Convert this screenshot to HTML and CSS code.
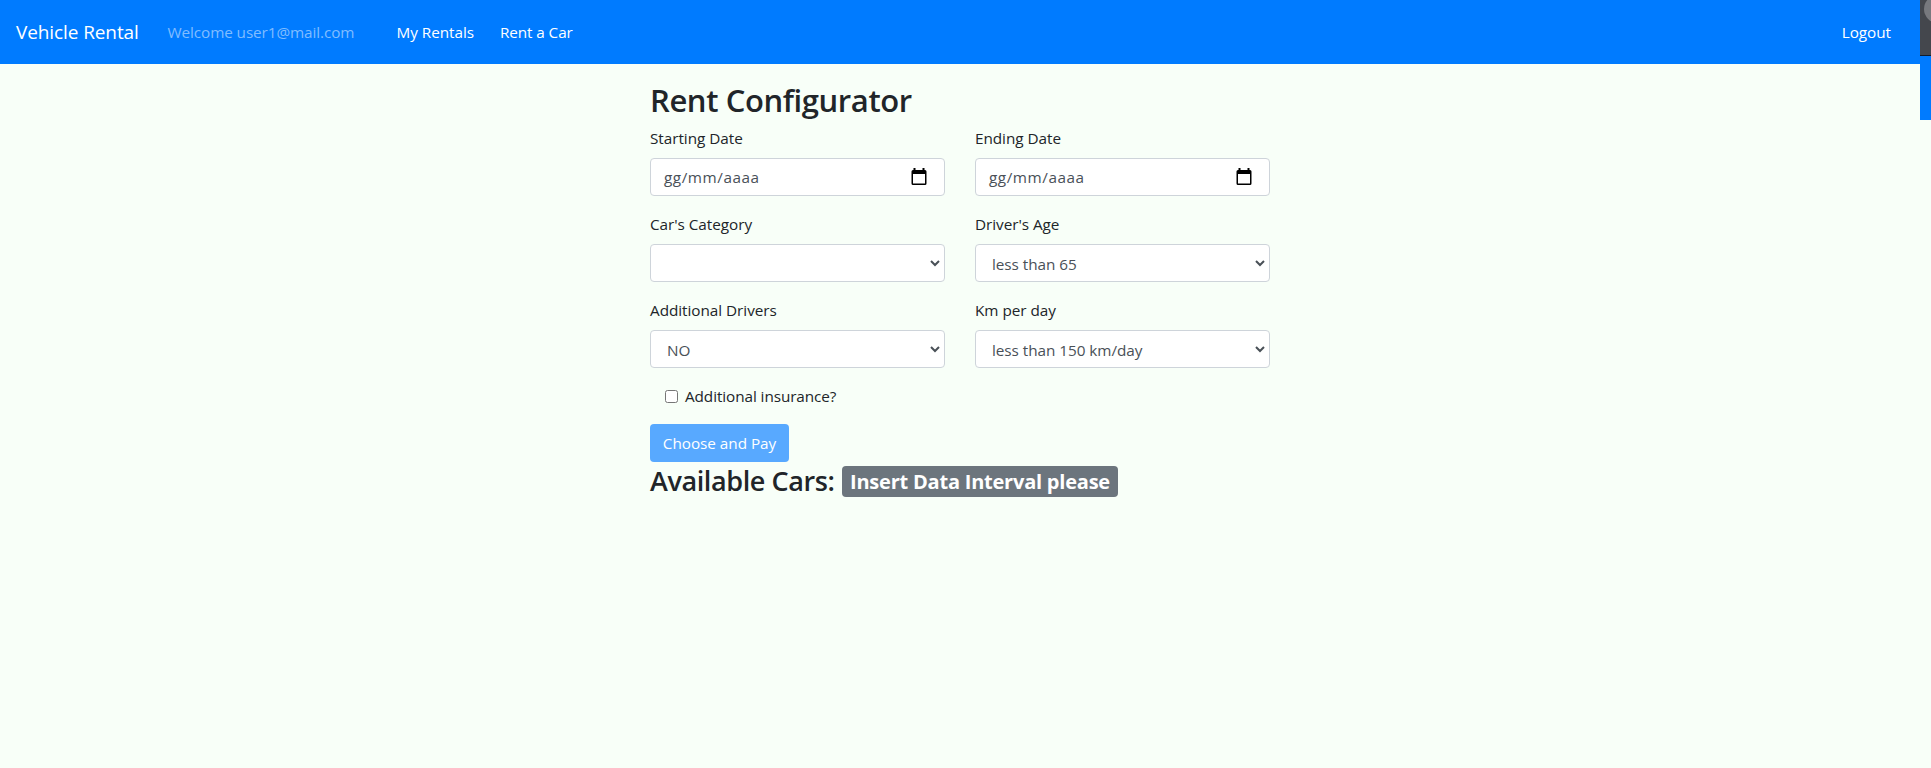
FILE: index.html
```html
<!DOCTYPE html>
<html lang="en">
<head>
<meta charset="utf-8">
<title>Vehicle Rental</title>
<link rel="stylesheet" href="styles.css">
</head>
<body>
<nav class="navbar">
  <a class="brand">Vehicle Rental</a>
  <span class="welcome">Welcome user1@mail.com</span>
  <a class="nav-link rentals">My Rentals</a>
  <a class="nav-link rent">Rent a Car</a>
  <a class="nav-link logout">Logout</a>
</nav>
<div class="edge"><svg class="edge-top" width="11" height="56" viewBox="0 0 11 56"><rect width="11" height="56" fill="#44474d"/><circle cx="18" cy="9" r="14" fill="#77797e"/><rect y="55" width="11" height="1" fill="#111c2c"/></svg></div>
<main class="page">
  <h2 class="title">Rent Configurator</h2>
  <form class="form">
    <div class="group"><label>Starting Date</label>
      <div class="control date"><span>gg/mm/aaaa</span><svg class="calendar" width="16" height="18" viewBox="0 0 16 18"><path fill-rule="evenodd" d="M2.5 0h2v2h7V0h2v2H14q1.500 0 1.500 1.500v12Q15.500 17 14 17H2Q.5 17 .5 15.500v-12Q.5 2 2 2h.5zM2 6v9.500h12V6z"/></svg></div></div>
    <div class="group"><label>Ending Date</label>
      <div class="control date"><span>gg/mm/aaaa</span><svg class="calendar" width="16" height="18" viewBox="0 0 16 18"><path fill-rule="evenodd" d="M2.5 0h2v2h7V0h2v2H14q1.500 0 1.500 1.500v12Q15.500 17 14 17H2Q.5 17 .5 15.500v-12Q.5 2 2 2h.5zM2 6v9.500h12V6z"/></svg></div></div>
    <div class="group"><label>Car's Category</label>
      <div class="control select"><span></span><svg class="chevron" width="10" height="7" viewBox="0 0 10 7"><path d="M1 1l4 4 4-4"/></svg></div></div>
    <div class="group"><label>Driver's Age</label>
      <div class="control select"><span>less than 65</span><svg class="chevron" width="10" height="7" viewBox="0 0 10 7"><path d="M1 1l4 4 4-4"/></svg></div></div>
    <div class="group"><label>Additional Drivers</label>
      <div class="control select"><span>NO</span><svg class="chevron" width="10" height="7" viewBox="0 0 10 7"><path d="M1 1l4 4 4-4"/></svg></div></div>
    <div class="group"><label>Km per day</label>
      <div class="control select"><span>less than 150 km/day</span><svg class="chevron" width="10" height="7" viewBox="0 0 10 7"><path d="M1 1l4 4 4-4"/></svg></div></div>
  </form>
  <div class="check"><input type="checkbox"><span>Additional insurance?</span></div>
  <button class="pay">Choose and Pay</button>
  <h3 class="available"><span class="caption">Available Cars:</span><span class="badge">Insert Data Interval please</span></h3>
</main>
</body>
</html>
```
FILE: styles.css
```css
*{box-sizing:border-box}
body{margin:0;height:768px;overflow:hidden;background:#f8fff8;color:#212529;font:15.3px/24px "Open Sans","Noto Sans",sans-serif;letter-spacing:-.04px}
.navbar{display:flex;align-items:center;height:64px;width:1920px;padding:0 29px 0 16px;background:#007bff;color:#fff}
.brand{width:151.500px;font-size:19px;letter-spacing:-.1px}
.welcome{width:229px;color:#80bdff;letter-spacing:-.09px}
.rentals{width:103.500px}
.rent{letter-spacing:-.1px}
.logout{margin-left:auto}
.edge{position:absolute;right:0;top:0;width:11px;height:120px;background:#007bff}
.edge-top{display:block}
.page{width:620px;margin:16px 0 0 650px}
.title{font-size:31px;line-height:38.4px;font-weight:600;letter-spacing:-.4px;margin:0 0 8px;padding-top:1px;height:38.4px}
.form{display:grid;grid-template-columns:295px 295px;column-gap:30px;row-gap:16px}
.group label{display:block;height:24px;margin-bottom:8px}
.control{display:flex;align-items:center;justify-content:space-between;height:38px;border:1px solid #ced4da;border-radius:4px;background:#fff;color:#495057;padding:0 17px 0 13px}
.date{letter-spacing:.55px}
.select{padding:0 4px 0 16px}
.select span{padding-top:2px}
.chevron path{fill:none;stroke:#495057;stroke-width:2}
.check{display:flex;align-items:center;height:24px;margin:16px 0;padding-left:15px;letter-spacing:-.08px}
.check input{margin:0 7px 0 0;width:13px;height:13px}
.pay{display:block;width:139px;height:38px;border:0;border-radius:4px;background:#58a9ff;color:#fff;font:inherit;letter-spacing:inherit;padding:0}
.available{display:flex;align-items:flex-start;font-size:27px;line-height:34px;font-weight:600;margin:0;padding-top:2px}
.caption{width:192px;letter-spacing:-.4px;white-space:nowrap}
.badge{margin-top:1.500px;width:276px;height:31px;border-radius:4px;background:#6c757d;color:#fff;font-size:20px;line-height:32px;font-weight:700;text-align:center;letter-spacing:-.22px}
```
